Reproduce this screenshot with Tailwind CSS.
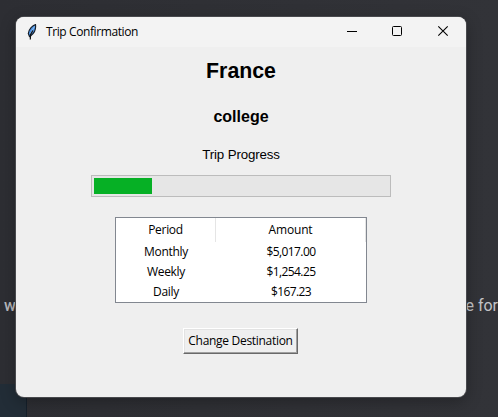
<!DOCTYPE html>
<html lang="en">
<head>
<meta charset="utf-8">
<title>Trip Confirmation</title>
<script src="https://cdn.jsdelivr.net/npm/@tailwindcss/browser@4"></script>
</head>
<body class="relative h-[417px] w-[498px] overflow-hidden bg-linear-to-r from-[#2d2e33] to-[#323338] font-['Open_Sans','Noto_Sans',sans-serif] text-xs text-black">
  <!-- Page behind the dialog -->
  <div class="absolute bottom-0 left-0 h-[33px] w-[27px] rounded-tr-sm border-r border-[#15202b] bg-[#222d37]"></div>
  <span class="absolute left-[4px] top-[296px] font-['Roboto',sans-serif] text-[16px] leading-5 font-medium tracking-[-0.5px] text-[#b9babd]">we</span>
  <span class="absolute right-0 top-[296px] whitespace-nowrap font-['Roboto',sans-serif] text-[16px] leading-5 text-[#c2c3c6]">be for</span>

  <!-- Dialog window -->
  <main class="absolute left-[16px] top-[17px] flex h-[380px] w-[450px] flex-col overflow-hidden rounded-lg bg-[#efefef] shadow-[0_0_0_1px_#48494d,0_4px_16px_rgba(0,0,0,0.3)]">
    <header class="flex h-[30px] shrink-0 items-center bg-[#f3f3f3] pl-[10px]">
      <svg class="h-[16px] w-[12px]" viewBox="0 0 12 16">
        <path d="M9.500 .700C6.500 1.500 3 5 2.300 9.500L3.500 12.500L5 11.500C8 9.500 10 5 9.500 .700Z" fill="#4b91e2" stroke="#17202b" stroke-width="1.200"/>
        <path d="M8.500 2.500L4 10" stroke="#8fc0f5" stroke-width="1"/>
        <path d="M6.800 6.500L4.600 10.500L4.300 15.500" fill="none" stroke="#111" stroke-width="1.200"/>
      </svg>
      <h1 class="ml-[8px] w-[110px] whitespace-nowrap text-[12px] tracking-[-0.4px]">Trip Confirmation</h1>
      <div class="ml-auto flex h-full">
        <svg class="h-[30px] w-[46px]" viewBox="0 0 46 30"><path d="M19 14.500H29" stroke="#000"/></svg>
        <svg class="h-[30px] w-[46px]" viewBox="0 0 46 30"><rect x="18.500" y="9.500" width="9" height="9" rx="1" fill="none" stroke="#000"/></svg>
        <svg class="h-[30px] w-[46px]" viewBox="0 0 46 30"><path d="M18.300 9.300L27.700 18.700M27.700 9.300L18.300 18.700" stroke="#000" stroke-width="1.100"/></svg>
      </div>
    </header>

    <section class="flex flex-col items-center font-['Liberation_Sans',Arial,sans-serif]">
      <h2 class="mt-[12px] text-[21.3px] leading-6 font-bold">France</h2>
      <h3 class="mt-[24px] text-[16px] leading-5 font-bold">college</h3>
      <p class="mt-[20px] text-[13.3px] leading-4 tracking-[-0.15px]">Trip Progress</p>
    </section>

    <div class="mt-[12px] ml-[75px] h-[22px] w-[300px] shrink-0 border border-[#bcbcbc] bg-[#e6e6e6] p-[2px]">
      <div class="h-[16px] bg-[#06b025]" style="width:58px"></div>
    </div>

    <div class="mt-[20px] ml-[99px] h-[86px] w-[252px] shrink-0 border border-[#828790] bg-white text-center text-[12px]">
      <div class="grid h-[24px] grid-cols-[100px_150px] leading-[24px]">
        <div class="border-r border-[#e5e5e5] tracking-[-0.3px]">Period</div>
        <div class="border-r border-[#e5e5e5] tracking-[-0.15px]">Amount</div>
      </div>
      <div class="grid grid-cols-[100px_150px] leading-[20px] tracking-[-0.3px]">
        <div>Monthly</div><div class="tracking-[-0.6px]">$5,017.00</div>
        <div>Weekly</div><div class="tracking-[-0.6px]">$1,254.25</div>
        <div>Daily</div><div class="tracking-[-0.6px]">$167.23</div>
      </div>
    </div>

    <button class="mt-[25px] ml-[167px] h-[26px] w-[115px] shrink-0 border border-t-white border-l-white border-r-[#696969] border-b-[#696969] bg-[#efefef] text-[12px] leading-[22px] tracking-[-0.3px] whitespace-nowrap shadow-[inset_-1px_-1px_#a0a0a0,inset_1px_1px_#e3e3e3]">Change Destination</button>
  </main>
</body>
</html>
